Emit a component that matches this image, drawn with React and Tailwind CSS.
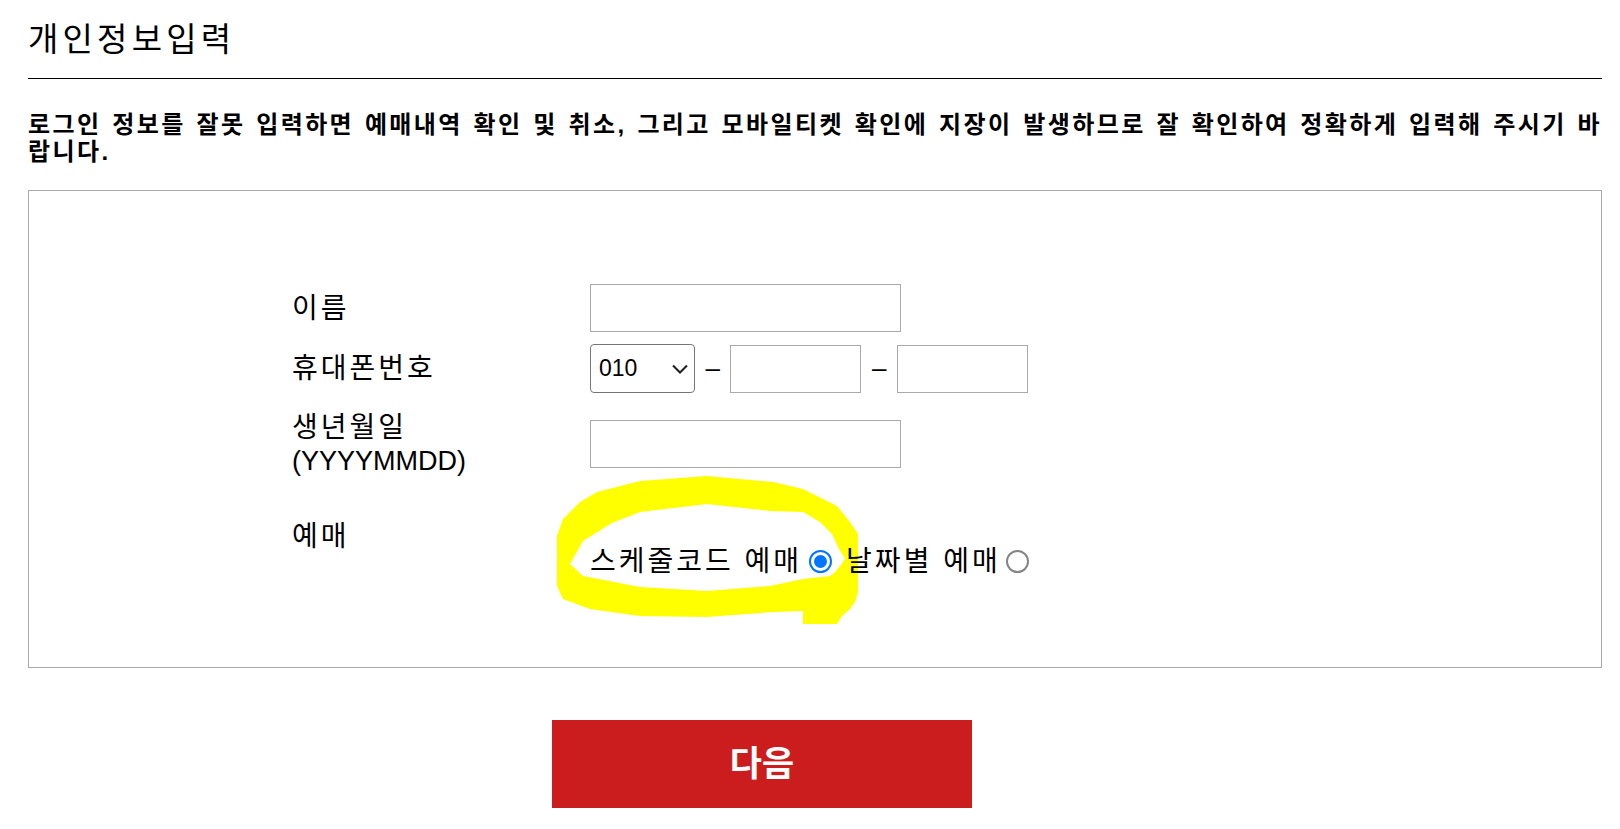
import { useState } from 'react'

const label = 'w-[298px] shrink-0 text-[28px] leading-[33px] tracking-[3px]'
const field = 'h-[48px] border border-[#a9a9a9] bg-white px-2 text-[23px] outline-none'

function Radio({ checked, onClick }) {
  if (checked) {
    return (
      <span onClick={onClick} className="flex h-[23px] w-[23px] cursor-pointer items-center justify-center rounded-full border-2 border-[#0075ff] bg-white">
        <span className="block h-[13px] w-[13px] rounded-full bg-[#0075ff]" />
      </span>
    )
  }
  return <span onClick={onClick} className="block h-[23px] w-[23px] cursor-pointer rounded-full border-2 border-[#858585] bg-white" />
}

export default function App() {
  const [mode, setMode] = useState('schedule')

  return (
    <div className="min-h-screen bg-white pl-[28px] pr-[18px] font-['Liberation_Sans','Noto_Sans_CJK_KR',sans-serif] text-black">
      <div className="border-b border-black pt-[20px] pb-[18px]">
        <h1 className="text-[33px] font-normal leading-[40px] tracking-[4.2px]">개인정보입력</h1>
      </div>

      <p className="mt-[32px] text-[24px] font-bold leading-[27px] tracking-[2.4px]">
        <span className="block whitespace-nowrap text-justify [text-align-last:justify]">
          로그인 정보를 잘못 입력하면 예매내역 확인 및 취소, 그리고 모바일티켓 확인에 지장이 발생하므로 잘 확인하여 정확하게 입력해 주시기 바
        </span>
        <span className="block">랍니다.</span>
      </p>

      <div className="relative mt-[25px] h-[478px] border border-[#a9a9a9] pl-[263px] pt-[93px]">
        {/* yellow marker annotation */}
        <svg className="pointer-events-none absolute left-[511px] top-[278px]" width="340" height="170" viewBox="540 470 340 170">
          <path
            fill="#ffff00"
            fillRule="evenodd"
            d="M597 493 L640 482 L707 477 L773 483 L803 490 L837 507 L850 523 L858 535 L858 593 L855 603 L850 610 L842 617 L837 625 L803 625 L803 612 L773 613 L707 618 L640 617 L590 610 L563 600 L557 587 L557 537 L563 520 L580 503 Z M570 565 L583 542 L612 524 L640 513 L707 505 L770 512 L803 513 L820 523 L832 535 L838 548 L845 560 L840 567 L835 573 L830 577 L803 580 L770 587 L707 592 L640 588 L583 577 Z"
          />
        </svg>

        <div className="relative flex h-[48px] items-center">
          <span className={label}>이름</span>
          <input className={`${field} w-[311px]`} />
        </div>

        <div className="relative mt-[12px] flex h-[49px] items-center gap-[10.5px]">
          <span className={`${label} -mr-[10.5px]`}>휴대폰번호</span>
          <div className="relative">
            <select className="h-[49px] w-[105px] appearance-none rounded-[4px] border border-[#767676] bg-white pl-[8px] text-[23px] outline-none">
              <option>010</option>
              <option>011</option>
              <option>016</option>
              <option>017</option>
              <option>019</option>
            </select>
            {/* chevron */}
            <svg className="pointer-events-none absolute left-[82px] top-[20px]" width="16" height="10" viewBox="0 0 16 10">
              <path d="M1 1.5 L8 8.5 L15 1.5" fill="none" stroke="#1f1f1f" strokeWidth="2" />
            </svg>
          </div>
          <span className="text-[26px] leading-[33px]">–</span>
          <input className={`${field} w-[131px]`} />
          <span className="text-[26px] leading-[33px]">–</span>
          <input className={`${field} w-[131px]`} />
        </div>

        <div className="relative mt-[18px] flex h-[66px] items-center">
          <span className={label}>
            생년월일
            <br />
            <span className="text-[27px] tracking-normal">(YYYYMMDD)</span>
          </span>
          <input className={`${field} w-[311px]`} />
        </div>

        <div className="relative mt-[43px] flex items-start">
          <span className={label}>예매</span>
          <div className="mt-[25px] flex items-center text-[28px] leading-[33px] tracking-[3px]">
            <span>스케줄코드 예매</span>
            <span className="ml-[7px]">
              <Radio checked={mode === 'schedule'} onClick={() => setMode('schedule')} />
            </span>
            <span className="ml-[14px]">날짜별 예매</span>
            <span className="ml-[5px]">
              <Radio checked={mode === 'date'} onClick={() => setMode('date')} />
            </span>
          </div>
        </div>
      </div>

      <div className="mt-[52px] pl-[524px]">
        <button className="flex h-[88px] w-[420px] items-center justify-center bg-[#cb1d1e] text-[35px] font-bold text-white">
          다음
        </button>
      </div>
    </div>
  )
}
